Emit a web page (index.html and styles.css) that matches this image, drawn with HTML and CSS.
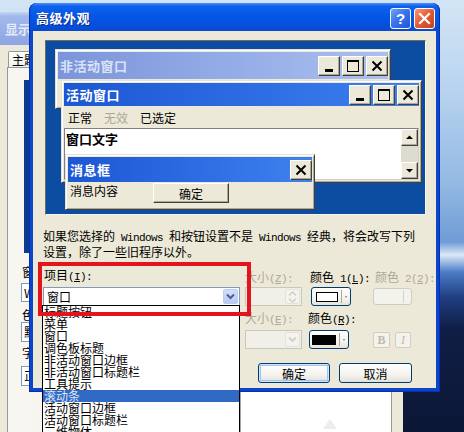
FILE: index.html
```html
<!DOCTYPE html>
<html lang="zh-CN">
<head>
<meta charset="utf-8">
<title>高级外观</title>
<link rel="stylesheet" href="styles.css">
</head>
<body>
<div class="desktop">
  <div class="bgwin">
    <div class="bgwin-title">显示 属性</div>
    <div class="bgwin-body">
      <div class="tabs"><span class="tab">主题</span><span class="tab">桌面</span></div>
      <div class="tabpanel">
        <div class="bg-left">
          <div class="bg-preview"></div>
          <div class="bg-label">窗口和按钮(W):</div>
          <div class="bg-combo">Windows XP 样式</div>
          <div class="bg-label second">色彩方案(C):</div>
          <div class="bg-combo tall">默认(蓝)</div>
          <div class="bg-label third">字体大小(F):</div>
          <div class="bg-combo tall last">正常</div>
        </div>
        <div class="bg-right">
          <div class="bg-box"><span class="bg-pointer"></span></div>
        </div>
      </div>
    </div>
  </div>

  <div class="dlg">
    <div class="dlg-title">
      <span class="dlg-caption">高级外观</span>
      <span class="cap-btn help">?</span>
      <span class="cap-btn close"><svg width="13" height="13" viewBox="0 0 13 13"><path d="M2 2L11 11M11 2L2 11" stroke="#fff" stroke-width="2.2" stroke-linecap="square"/></svg></span>
    </div>
    <div class="dlg-body">
      <div class="preview">
        <div class="pwin inactive">
          <div class="ptitle inactive-title">
            <span class="ptitle-text">非活动窗口</span>
            <span class="pbtns">
              <span class="pbtn"><svg width="22" height="20" viewBox="0 0 22 20"><rect x="7" y="13" width="8" height="3"/></svg></span>
              <span class="pbtn"><svg width="22" height="20" viewBox="0 0 22 20"><path fill-rule="evenodd" d="M5 4h12v12H5zM6 6h10v9H6z"/></svg></span>
              <span class="pbtn"><svg width="22" height="20" viewBox="0 0 22 20"><path d="M6.5 5.5L15.5 14.5M15.5 5.5L6.5 14.5" stroke="#000" stroke-width="2"/></svg></span>
            </span>
          </div>
        </div>
        <div class="pwin active">
          <div class="ptitle active-title">
            <span class="ptitle-text">活动窗口</span>
            <span class="pbtns">
              <span class="pbtn"><svg width="22" height="20" viewBox="0 0 22 20"><rect x="7" y="13" width="8" height="3"/></svg></span>
              <span class="pbtn"><svg width="22" height="20" viewBox="0 0 22 20"><path fill-rule="evenodd" d="M5 4h12v12H5zM6 6h10v9H6z"/></svg></span>
              <span class="pbtn"><svg width="22" height="20" viewBox="0 0 22 20"><path d="M6.5 5.5L15.5 14.5M15.5 5.5L6.5 14.5" stroke="#000" stroke-width="2"/></svg></span>
            </span>
          </div>
          <div class="pmenu"><span>正常</span><span class="pdis">无效</span><span>已选定</span></div>
          <div class="ptext">
            <div class="ptext-body">窗口文字</div>
            <div class="pscroll">
              <span class="sbtn"><svg width="15" height="15" viewBox="0 0 15 15"><path d="M4 9h7L7.5 5.5z"/></svg></span>
              <span class="strack"></span>
              <span class="sbtn"><svg width="15" height="15" viewBox="0 0 15 15"><path d="M4 6h7L7.5 9.5z"/></svg></span>
            </div>
          </div>
        </div>
        <div class="pwin msgbox">
          <div class="ptitle active-title msg-title">
            <span class="ptitle-text">消息框</span>
            <span class="pbtns">
              <span class="pbtn"><svg width="22" height="20" viewBox="0 0 22 20"><path d="M6.5 5.5L15.5 14.5M15.5 5.5L6.5 14.5" stroke="#000" stroke-width="2"/></svg></span>
            </span>
          </div>
          <div class="msg-body"><span class="msg-text">消息内容</span><span class="pbutton">确定</span></div>
        </div>
      </div>

      <p class="note">如果您选择的<span class="l"> Windows </span>和按钮设置不是<span class="l"> Windows </span>经典，将会改写下列<br>设置，除了一些旧程序以外。</p>

      <div class="form">
        <div class="lbl item-lbl">项目<span class="l">(<u>I</u>):</span></div>
        <div class="lbl dis">大小<span class="l">(<u>Z</u>):</span></div>
        <div class="lbl c3">颜色<span class="l"> 1(<u>L</u>):</span></div>
        <div class="lbl dis c4">颜色<span class="l"> 2(<u>2</u>):</span></div>

        <div class="combo-wrap">
          <div class="combo">
            <span>窗口</span>
            <span class="combo-arrow"><svg width="9" height="7" viewBox="0 0 9 7"><path d="M1 1.5L4.5 5L8 1.5" fill="none" stroke="#4D6185" stroke-width="2"/></svg></span>
          </div>
          <div class="droplist">
            <div>标题按钮</div>
            <div>菜单</div>
            <div>窗口</div>
            <div>调色板标题</div>
            <div>非活动窗口边框</div>
            <div>非活动窗口标题栏</div>
            <div>工具提示</div>
            <div class="sel">滚动条</div>
            <div>活动窗口边框</div>
            <div>活动窗口标题栏</div>
            <div>三维物体</div>
          </div>
        </div>
        <div class="spin"><span class="spin-arrows"><svg width="11" height="14" viewBox="0 0 11 14"><path d="M2 5.5L5.5 2L9 5.5M2 8.5L5.5 12L9 8.5" fill="none" stroke="#D2D0C6" stroke-width="1.5"/></svg></span></div>
        <div class="colorbtn"><span class="swatch white"></span><span class="sep"></span><svg width="7" height="4" viewBox="0 0 7 4"><path d="M0 0h7L3.5 4z"/></svg></div>
        <div class="colorbtn disabled"><span class="swatch none"></span><span class="sep"></span><svg width="7" height="4" viewBox="0 0 7 4"><path d="M0 0h7L3.5 4z" fill="#C5C2B8"/></svg></div>

        <div></div>
        <div class="lbl dis r3">大小<span class="l">(<u>E</u>):</span></div>
        <div class="lbl r3 c3b">颜色<span class="l">(<u>R</u>):</span></div>
        <div></div>

        <div></div>
        <div class="spin"><span class="spin-arrows"><svg width="9" height="7" viewBox="0 0 9 7"><path d="M1 1.5L4.5 5L8 1.5" fill="none" stroke="#D2D0C6" stroke-width="1.8"/></svg></span></div>
        <div class="colorbtn second"><span class="swatch black"></span><span class="sep"></span><svg width="7" height="4" viewBox="0 0 7 4"><path d="M0 0h7L3.5 4z"/></svg></div>
        <div class="fmts"><span class="fmt bold">B</span><span class="fmt ital">I</span></div>
      </div>

      <div class="actions">
        <span class="btn default">确定</span>
        <span class="btn">取消</span>
      </div>
    </div>
  </div>

  <div class="redbox"></div>
</div>
</body>
</html>
```

FILE: styles.css
```css
* { box-sizing: border-box; }

body {
  margin: 0;
  font-family: "Noto Sans CJK SC", "Noto Sans", sans-serif;
  font-size: 12px;
  color: #000;
  text-autospace: no-autospace;
}

.l {
  font-family: "Liberation Mono", "DejaVu Sans Mono", monospace;
  font-size: 11px;
  letter-spacing: -0.6px;
}

.desktop {
  position: relative;
  width: 464px;
  height: 432px;
  overflow: hidden;
  background: linear-gradient(180deg, #D3E5F5 0%, #BCD6F0 18%, #94BAE4 42%, #6F9CD6 56%, #DCE8F6 59%, #4B7CC6 63%, #1F3D80 69%, #101E46 76%, #0B1736 100%);
}

/* ---------- background window (显示 属性) ---------- */
.bgwin {
  position: absolute;
  left: -4px;
  top: 12px;
  width: 407px;
  height: 430px;
  z-index: 1;
  background: #ECE9D8;
  border-radius: 7px 7px 0 0;
  padding: 0 4px;
  display: flex;
  flex-direction: column;
}

.bgwin-title {
  height: 33px;
  margin: 0 -4px;
  padding-left: 9px;
  border-radius: 7px 7px 0 0;
  background: linear-gradient(180deg, #C6D5F4 0, #A3B8EC 4px, #98AEE8 60%, #8EA4E2 100%);
  color: #E4EBF9;
  font-weight: bold;
  font-size: 13px;
  line-height: 33px;
  white-space: nowrap;
}

.bgwin-body {
  flex: 1;
  padding-top: 6px;
  display: flex;
  flex-direction: column;
}

.tabs {
  display: flex;
  padding-left: 8px;
  height: 16px;
}

.tab {
  padding: 0 5px 0 3px;
  height: 16px;
  line-height: 15px;
  border: 1px solid #919B9C;
  border-bottom: none;
  border-radius: 2px 2px 0 0;
  background: linear-gradient(#FFFFFF, #F0F0EA);
  white-space: nowrap;
}

.tabpanel {
  margin-left: 7px;
  width: 385px;
  flex: 1;
  border: 1px solid #919B9C;
  background: linear-gradient(90deg, #F7F6F1, #F1EFE6);
  display: flex;
}

.bg-left {
  width: 232px;
  padding-left: 14px;
}

.bg-right {
  flex: 1;
  display: flex;
  align-items: flex-end;
}

.bg-box {
  position: relative;
  width: 100%;
  height: 46px;
  margin-bottom: 4px;
  background: #FFFFFF;
  border-left: 1px solid #A7A69C;
}

.bg-pointer {
  position: absolute;
  left: 82px;
  top: 28px;
  width: 0;
  height: 0;
  border-left: 7px solid transparent;
  border-right: 7px solid transparent;
  border-bottom: 10px solid #EDEDED;
}

.bg-preview {
  margin: 12px 0 0 2px;
  width: 300px;
  height: 173px;
  background: #0B3C8C;
}

.bg-label {
  margin-top: 12px;
  line-height: 14px;
  white-space: nowrap;
}
.bg-label.second { margin-top: 6px; }
.bg-label.third { margin-top: 4px; }

.bg-combo {
  margin: 4px 0 0 -1px;
  width: 200px;
  height: 19px;
  border: 1px solid #7F9DB9;
  background: #fff;
  padding-left: 2px;
  line-height: 17px;
  white-space: nowrap;
}
.bg-combo.tall { height: 20px; margin-top: 0; line-height: 18px; }
.bg-combo.last { margin-top: 6px; }

/* ---------- main dialog ---------- */
.dlg {
  position: absolute;
  left: 29px;
  top: 3px;
  width: 411px;
  height: 389px;
  z-index: 2;
  border-radius: 8px 8px 0 0;
  padding: 0 4px 4px;
  display: flex;
  flex-direction: column;
  background: linear-gradient(180deg, #4A93F8 0, #0F62EE 3px, #0557E6 12px, #0550DD 22px, #0A48D0 28px, #0A45CC 100%);
  box-shadow: inset 1px 0 #0A2FA8, inset -1px 0 #0A2FA8, inset 0 -1px #0A2FA8;
}

.dlg-title {
  height: 28px;
  flex: none;
  display: flex;
  align-items: center;
  padding-left: 3px;
}

.dlg-caption {
  color: #fff;
  font-weight: bold;
  font-size: 13px;
  letter-spacing: 0.5px;
  text-shadow: 1px 1px #0B2A8E;
}

.cap-btn {
  width: 21px;
  height: 21px;
  border: 1px solid #fff;
  border-radius: 3px;
  display: flex;
  align-items: center;
  justify-content: center;
  margin-top: 3px;
}

.help {
  margin-left: auto;
  background: linear-gradient(135deg, #6EA4FA 0%, #3A74EC 45%, #1F55D8 100%);
  color: #fff;
  font: bold 15px "Liberation Sans", sans-serif;
}

.close {
  margin-left: 3px;
  margin-right: 1px;
  background: linear-gradient(135deg, #F49A78 0%, #E45A32 50%, #C83E16 100%);
}

.dlg-body {
  flex: 1;
  background: #ECE9D8;
  display: flex;
  flex-direction: column;
  position: relative;
}

/* ---------- preview ---------- */
.preview {
  position: relative;
  margin: 9px 0 0 12px;
  width: 381px;
  height: 175px;
  flex: none;
  background: #0C4DA2;
  border: 1px solid;
  border-color: #6F6D62 #F6F5EF #F6F5EF #6F6D62;
}

.pwin {
  position: absolute;
  background: #ECE9D8;
  border: 1px solid;
  border-color: #E4E2D8 #404040 #404040 #E4E2D8;
  box-shadow: inset 1px 1px #FFFFFF, inset -1px -1px #ACA899;
  padding: 2px;
  display: flex;
  flex-direction: column;
}

.inactive { left: 9px; top: 8px; width: 336px; height: 60px; }
.active { left: 15px; top: 39px; width: 361px; height: 103px; }
.msgbox { left: 19px; top: 113px; width: 250px; height: 56px; }

.ptitle {
  display: flex;
  align-items: center;
  flex: none;
  padding-left: 2px;
}

.inactive-title {
  height: 27px;
  background: linear-gradient(90deg, #7C95DA 0%, #93ABE6 50%, #ABC0EF 100%);
  color: #D9E2F6;
}

.active-title {
  height: 23px;
  background: linear-gradient(90deg, #1D57D3 0%, #2C6BE2 50%, #3E82EE 100%);
  color: #fff;
}

.msg-title { height: 25px; }

.ptitle-text {
  font-weight: bold;
  font-size: 13px;
  letter-spacing: 0.5px;
}

.pbtns {
  margin-left: auto;
  display: flex;
  gap: 2px;
}

.pbtn {
  width: 22px;
  height: 20px;
  background: #ECE9D8;
  border: 1px solid;
  border-color: #FFFFFF #404040 #404040 #FFFFFF;
  box-shadow: inset -1px -1px #ACA899;
  display: flex;
  align-items: center;
  justify-content: center;
  overflow: hidden;
}
.pbtn svg { flex: none; }

.pmenu {
  height: 22px;
  flex: none;
  display: flex;
  gap: 12px;
  padding: 3px 0 0 4px;
  line-height: 18px;
}
.pdis { color: #ACA899; }

.ptext {
  flex: none;
  height: 52px;
  display: flex;
  border: 1px solid;
  border-color: #808080 #D4D0C8 #D4D0C8 #808080;
}

.ptext-body {
  flex: 1;
  background: #fff;
  padding: 3px 0 0 1px;
  line-height: 14px;
  font-weight: bold;
  font-size: 13px;
}

.pscroll {
  width: 17px;
  display: flex;
  flex-direction: column;
}

.sbtn {
  height: 17px;
  flex: none;
  background: #ECE9D8;
  border: 1px solid;
  border-color: #FFFFFF #404040 #404040 #FFFFFF;
  box-shadow: inset -1px -1px #ACA899;
  display: flex;
  align-items: center;
  justify-content: center;
}

.strack {
  flex: 1;
  background: #DEDBCF;
}

.msg-body {
  flex: 1;
  display: flex;
  align-items: flex-start;
  padding-left: 2px;
}

.msg-text {
  margin-top: 2px;
  line-height: 14px;
}

.pbutton {
  margin: 1px 0 0 35px;
  width: 76px;
  height: 20px;
  background: #ECE9D8;
  border: 1px solid;
  border-color: #FFFFFF #404040 #404040 #FFFFFF;
  box-shadow: inset -1px -1px #ACA899;
  display: flex;
  align-items: center;
  justify-content: center;
}

/* ---------- note ---------- */
.note {
  margin: 14px 0 0 10px;
  line-height: 14px;
  white-space: nowrap;
}

/* ---------- form ---------- */
.form {
  display: grid;
  grid-template-columns: 202px 64px 64px 39px;
  grid-template-rows: 16px 21px 22px 21px;
  margin: 11px 0 0 10px;
}

.lbl {
  line-height: 14px;
  white-space: nowrap;
}
.lbl u { text-underline-offset: 1px; }
.item-lbl { padding-left: 1px; margin-top: -2px; }
.lbl.dis { color: #ACA899; }
.lbl.c3 { padding-left: 1px; }
.lbl.c4 { padding-left: 2px; }
.lbl.r3 { align-self: end; padding-bottom: 2px; }
.lbl.c3b { margin-left: -1px; }

.combo-wrap { position: relative; }

.combo {
  margin-top: 1px;
  width: 197px;
  height: 19px;
  border: 1px solid #7F9DB9;
  background: #fff;
  display: flex;
  align-items: center;
  padding-left: 3px;
}

.combo-arrow {
  margin-left: auto;
  margin-right: 1px;
  width: 15px;
  height: 15px;
  border: 1px solid #B9CCF4;
  border-radius: 2px;
  background: linear-gradient(#D2DFFD, #B6CAF6);
  display: flex;
  align-items: center;
  justify-content: center;
}

.droplist {
  position: absolute;
  left: -1px;
  top: 19px;
  width: 198px;
  border: 1px solid #000;
  background: #fff;
  z-index: 5;
}
.droplist div {
  height: 12px;
  line-height: 12px;
  padding-left: 1px;
  white-space: nowrap;
}
.droplist .sel {
  background: #316AC5;
  color: #DDE6F6;
}

.spin {
  margin-top: 1px;
  width: 57px;
  height: 19px;
  border: 1px solid #C9C7BA;
  background: #F1F0E8;
  display: flex;
  justify-content: flex-end;
  padding: 1px;
}

.spin-arrows {
  width: 15px;
  border-radius: 2px;
  background: #F4F3EE;
  border: 1px solid #E4E2DA;
  display: flex;
  align-items: center;
  justify-content: center;
}

.colorbtn {
  margin: 1px 0 0 2px;
  width: 40px;
  height: 19px;
  border: 1px solid #003C74;
  border-radius: 3px;
  background: linear-gradient(#FFFFFF, #F2F1EB 70%, #E6E3D8);
  display: flex;
  align-items: center;
  padding: 0 3px 0 4px;
  gap: 3px;
}
.colorbtn.second { margin-left: 0; }
.colorbtn.disabled {
  margin: 2px 0 0 0;
  width: 39px;
  height: 17px;
  border-color: #CFCCC2;
  background: #F3F2EC;
}

.swatch {
  width: 22px;
  height: 10px;
  border: 1px solid #000;
  flex: none;
}
.swatch.white { background: #fff; }
.swatch.black { background: #000; width: 24px; margin-left: -2px; }
.swatch.none { border-color: transparent; }

.sep {
  width: 1px;
  height: 13px;
  background: #ACA899;
  flex: none;
}
.disabled .sep { background: #D6D3CA; }

.fmts {
  display: flex;
  gap: 5px;
  margin-top: 3px;
}

.fmt {
  width: 17px;
  height: 16px;
  border: 1px solid #D0CDC2;
  border-radius: 2px;
  background: #F3F2EC;
  color: #BDBAAE;
  display: flex;
  align-items: center;
  justify-content: center;
  font-family: "Liberation Serif", serif;
  font-size: 12px;
}
.fmt.bold { font-weight: bold; }
.fmt.ital { font-style: italic; width: 16px; }

/* ---------- actions ---------- */
.actions {
  display: flex;
  justify-content: flex-end;
  gap: 9px;
  margin-top: 13px;
  padding-right: 24px;
}

.btn {
  width: 73px;
  height: 20px;
  border: 1px solid #003C74;
  border-radius: 3px;
  background: linear-gradient(#FFFFFF, #F4F3EE 60%, #E4E1D6);
  display: flex;
  align-items: center;
  justify-content: center;
}
.btn.default {
  width: 72px;
  box-shadow: inset 0 0 0 1px #CEE7FF, inset 0 0 0 2px #A5C1F0;
}

/* ---------- annotation ---------- */
.redbox {
  position: absolute;
  left: 38px;
  top: 262px;
  width: 213px;
  height: 54px;
  border: 4px solid #E3141C;
  z-index: 10;
}
```
